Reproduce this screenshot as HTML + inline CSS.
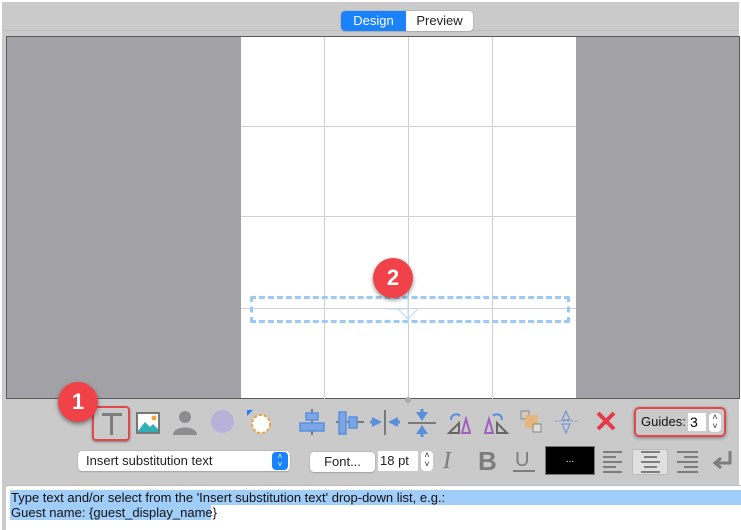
<!DOCTYPE html>
<html><head><meta charset="utf-8"><style>
*{margin:0;padding:0;box-sizing:border-box}
body{width:741px;height:530px;overflow:hidden;background:#fff;font-family:"Liberation Sans",sans-serif;position:relative}
.a{position:absolute}
.win{left:2px;top:2px;width:737px;height:528px;background:#cacaca}
.vl{position:absolute;top:0;width:1px;height:362px;background:#d0d0d0}
.hl{position:absolute;left:0;width:335px;height:1px;background:#d0d0d0}
.badge{position:absolute;width:40px;height:40px;border-radius:50%;background:#f04248;color:#fff;font:bold 22px "Liberation Sans",sans-serif;text-align:center;line-height:40px;box-shadow:0 2px 4px rgba(0,0,0,.45)}
</style></head><body>
<div class="a win"></div>
<div class="a" style="left:2px;top:30px;width:737px;height:1px;background:#bdbdbd"></div>
<div class="a" style="left:341px;top:11px;width:132px;height:20px;border-radius:4px;background:#fff;box-shadow:0 0 0 0.5px #aaa,0 1px 1px rgba(0,0,0,.15)"></div>
<div class="a" style="left:341px;top:11px;width:65px;height:20px;border-radius:4px 0 0 4px;background:#1a82fb;color:#fff;font-size:13px;line-height:20px;text-align:center">Design</div>
<div class="a" style="left:406px;top:11px;width:67px;height:20px;color:#222;font-size:13px;line-height:20px;text-align:center">Preview</div>
<div class="a" style="left:6px;top:36px;width:734px;height:363px;background:#a2a1a6;border:1px solid #5a5a5a"></div>
<div class="a" style="left:241px;top:37px;width:335px;height:361px;background:#fff">
 <div class="vl" style="left:83px"></div><div class="vl" style="left:167px"></div><div class="vl" style="left:251px"></div>
 <div class="hl" style="top:89px"></div><div class="hl" style="top:179px"></div><div class="hl" style="top:271px"></div>
</div>
<div class="a" style="left:250px;top:296px;width:320px;height:27px;border:3px dashed #9ccaf7;border-radius:2px"></div>
<svg class="a" style="left:388px;top:295px" width="42" height="35"><path d="M0 14 L20 14 M20 0 L20 30 M10 14 L20 24 L30 14" stroke="#b8dafa" fill="none"/></svg>
<div class="badge" style="left:373px;top:258px">2</div>
<div class="a" style="left:405px;top:397px;width:6px;height:6px;border-radius:50%;background:#aaa"></div>
<div class="a" style="left:92px;top:406px;width:38px;height:35px;border:2px solid #e0484c;border-radius:4px;box-shadow:0 1px 2px rgba(0,0,0,.4)"></div>
<div class="a" style="left:102px;top:413px;width:20px;height:3px;background:#7d7d7d"></div>
<div class="a" style="left:110px;top:413px;width:3px;height:22px;background:#7d7d7d"></div>
<div class="badge" style="left:58px;top:382px">1</div>
<svg class="a" style="left:136px;top:412px" width="24" height="22"><rect x="1" y="1" width="22" height="20" fill="#fff" stroke="#777" stroke-width="2"/><path d="M2 19 L9 10 L14 15 L17 12 L22 17 L22 20 L2 20Z" fill="#2fb0b7"/><circle cx="18" cy="6" r="2.5" fill="#f7a33b"/></svg>
<svg class="a" style="left:172px;top:409px" width="26" height="26"><circle cx="13" cy="8" r="6" fill="#8d8d8f"/><path d="M1 26 C1 16 25 16 25 26Z" fill="#8d8d8f"/></svg>
<div class="a" style="left:211px;top:410px;width:23px;height:23px;border-radius:50%;background:#b8b2db"></div>
<svg class="a" style="left:245px;top:408px" width="28" height="28"><circle cx="16" cy="16" r="9" fill="#fff" stroke="#e9a23b" stroke-width="2" stroke-dasharray="3 2"/><path d="M2 2 L8 2 L2 8Z" fill="#2b7ef0"/></svg>
<svg class="a" style="left:298px;top:409px" width="220" height="28" fill="#5a8fdb" stroke="#5a8fdb">
 <path d="M14 0 V26" stroke="#7a7a7a" stroke-width="2"/><rect x="8" y="4" width="12" height="7" fill="#7aa6e6" stroke-width="1.5"/><rect x="2" y="14" width="24" height="8" fill="#7aa6e6" stroke-width="1.5"/>
 <path d="M38 13 H66" stroke="#7a7a7a" stroke-width="2"/><rect x="41" y="3" width="7" height="22" fill="#7aa6e6" stroke-width="1.5"/><rect x="51" y="8" width="8" height="11" fill="#7aa6e6" stroke-width="1.5"/>
 <path d="M87 1 V26" stroke="#7a7a7a" stroke-width="2"/><path d="M74 8 L84 13 L74 18Z M100 8 L90 13 L100 18Z" stroke="none"/><path d="M72 13 H78 M96 13 H102" stroke-width="3"/>
 <path d="M110 14 H138" stroke="#7a7a7a" stroke-width="2"/><path d="M118 3 L124 12 L130 3Z M118 25 L124 16 L130 25Z" stroke="none"/><path d="M124 0 V4 M124 24 V28" stroke-width="3"/>
 <path d="M151 24 L161 14 L161 24Z" fill="none" stroke="#666" stroke-width="2"/><path d="M164 24 L168 10 L172 24Z" fill="none" stroke="#a060c0" stroke-width="2"/><path d="M153 11 C153 5 159 4 162 7" fill="none" stroke-width="2"/>
 <path d="M209 24 L199 14 L199 24Z" fill="none" stroke="#666" stroke-width="2"/><path d="M195 24 L191 10 L187 24Z" fill="none" stroke="#a060c0" stroke-width="2"/><path d="M204 11 C204 5 198 4 195 7" fill="none" stroke-width="2"/>
</svg>
<svg class="a" style="left:519px;top:409px" width="130" height="28">
 <rect x="2" y="2" width="8" height="8" fill="#ccc" stroke="#888"/><rect x="6" y="6" width="13" height="13" fill="#e7b67c"/><rect x="14" y="15" width="8" height="8" fill="#ddd" stroke="#888"/>
 <path d="M36 12 H58" stroke="#6a8fd0" stroke-dasharray="2 2"/><path d="M47 2 L43 11 L51 11Z M47 24 L43 15 L51 15Z" fill="none" stroke="#6a8fd0"/>
 <path d="M79 4 L95 20 M95 4 L79 20" stroke="#e3394b" stroke-width="4"/>
</svg>
<div class="a" style="left:634px;top:407px;width:92px;height:30px;border:2px solid #e0484c;border-radius:5px;box-shadow:0 1px 3px rgba(0,0,0,.4)"></div>
<div class="a" style="left:641px;top:414px;font-size:13px;color:#111">Guides:</div>
<div class="a" style="left:688px;top:413px;width:18px;height:18px;background:#fff;font-size:14px;line-height:18px;padding-left:2px">3</div>
<div class="a" style="left:709px;top:413px;width:12px;height:19px;background:#fff;border-radius:4px;font-size:9px;line-height:9px;text-align:center;color:#333">˄<br>˅</div>
<div class="a" style="left:78px;top:451px;width:212px;height:20px;background:#fff;border-radius:4px;box-shadow:0 0 0 .5px #aaa,0 1px 1px rgba(0,0,0,.2);font-size:13px;line-height:20px;padding-left:8px;color:#222">Insert substitution text</div>
<div class="a" style="left:272px;top:452px;width:16px;height:18px;background:#1a82fb;border-radius:4px;color:#fff;font-size:8px;line-height:8px;text-align:center;padding-top:1px">˄<br>˅</div>
<div class="a" style="left:310px;top:452px;width:65px;height:20px;background:#fff;border-radius:4px;box-shadow:0 0 0 .5px #aaa,0 1px 1px rgba(0,0,0,.2);font-size:13px;line-height:20px;text-align:center;color:#222">Font...</div>
<div class="a" style="left:378px;top:451px;width:40px;height:20px;background:#fff;font-size:13px;line-height:20px;padding-left:2px;color:#222">18 pt</div>
<div class="a" style="left:421px;top:451px;width:12px;height:20px;background:#fff;border-radius:4px;font-size:9px;line-height:9px;text-align:center;color:#333">˄<br>˅</div>
<div class="a" style="left:443px;top:448px;font:italic 24px 'Liberation Serif',serif;color:#7d7d7d">I</div>
<div class="a" style="left:478px;top:446px;font:bold 26px 'Liberation Sans',sans-serif;color:#7d7d7d">B</div>
<div class="a" style="left:515px;top:449px;font:20px 'Liberation Sans',sans-serif;color:#7d7d7d">U</div>
<div class="a" style="left:513px;top:470px;width:22px;height:2px;background:#7d7d7d"></div>
<div class="a" style="left:545px;top:446px;width:50px;height:29px;background:#000;border:1px solid #777;color:#fff;font-size:10px;text-align:center;line-height:26px">...</div>
<div class="a" style="left:632px;top:449px;width:36px;height:26px;background:#e0e0e0;border:1px solid #bbb"></div>
<svg class="a" style="left:602px;top:450px" width="100" height="24" stroke="#7d7d7d" stroke-width="2">
 <path d="M1 2H20 M1 7H14 M1 12H20 M1 17H14 M1 22H20"/>
 <path d="M39 2H58 M42 7H55 M39 12H58 M42 17H55 M39 22H58"/>
 <path d="M75 2H96 M82 7H96 M75 12H96 M82 17H96 M75 22H96"/>
</svg>
<svg class="a" style="left:710px;top:449px" width="26" height="24"><path d="M20 2 V14 H6 M11 9 L5 14 L11 19" fill="none" stroke="#7d7d7d" stroke-width="3"/></svg>
<div class="a" style="left:6px;top:485px;width:735px;height:45px;background:#fff;border-top:1px solid #bbb"></div>
<div class="a" style="left:10px;top:490px;width:731px;height:15px;background:#a1cdf9"></div>
<div class="a" style="left:10px;top:505px;width:201px;height:15px;background:#a1cdf9"></div>
<div class="a" style="left:11px;top:490px;font-size:13px;line-height:15px;color:#111;white-space:nowrap">Type text and/or select from the 'Insert substitution text' drop-down list, e.g.:<br>Guest name: {guest_display_name}</div>
</body></html>
